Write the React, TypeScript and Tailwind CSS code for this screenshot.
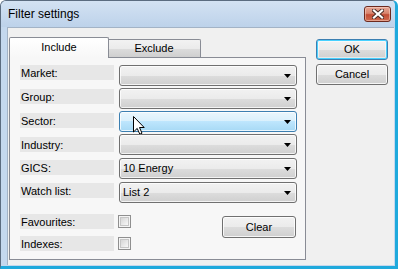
import React from 'react';

const FONT = "font-['Liberation_Sans',Arial,sans-serif]";

const rows = [
    { label: 'Market:', value: '', top: 'mt-0', lab: 'mt-0', hover: false },
    { label: 'Group:', value: '', top: 'mt-[2px]', lab: 'mt-[1px]', hover: false },
    { label: 'Sector:', value: '', top: 'mt-[2px]', lab: 'mt-[2px]', hover: true },
    { label: 'Industry:', value: '', top: 'mt-[2px]', lab: 'mt-[3px]', hover: false },
    { label: 'GICS:', value: '10 Energy', top: 'mt-[3px]', lab: 'mt-[2px]', hover: false },
    { label: 'Watch list:', value: 'List 2', top: 'mt-[3px]', lab: 'mt-[1px]', hover: false },
];

const Arrow = () => (
    <svg width="7" height="4" viewBox="0 0 7 4" className="ml-auto mr-[5px] shrink-0">
        <polygon points="0,0 7,0 3.5,4" fill="#000" />
    </svg>
);

const Combo = ({ value, hover }: { value: string; hover: boolean }) => (
    <div
        className={`relative w-[178px] h-[21px] rounded-[3px] border flex items-center pl-[3px] text-[11px] text-black shadow-[inset_0_0_0_1px_rgba(255,255,255,0.75)] ${
            hover
                ? 'border-[#3c7fb1] bg-[linear-gradient(#eaf6fd_0%,#d9f0fc_50%,#bee6fd_50%,#a7d9f5_100%)]'
                : 'border-[#707070] bg-[linear-gradient(#f2f2f2_0%,#ebebeb_50%,#dddddd_50%,#cfcfcf_100%)]'
        }`}
    >
        <span>{value}</span>
        <Arrow />
        {hover && (
            <svg width="12" height="19" viewBox="0 0 12 19" className="absolute left-[13px] top-[4px]">
                <path d="M0.5 0.5 L0.5 16 L4.2 12.4 L6.8 18.2 L9 17.2 L6.5 11.5 L11.2 11.5 Z" fill="#fff" stroke="#000" strokeWidth="1" />
            </svg>
        )}
    </div>
);

const Button = ({ text, isDefault }: { text: string; isDefault?: boolean }) => (
    <div
        className={`h-[21px] w-[72px] rounded-[3px] border flex items-center justify-center text-[11px] text-black bg-[linear-gradient(#f2f2f2_0%,#ebebeb_50%,#dddddd_50%,#cfcfcf_100%)] ${
            isDefault
                ? 'border-[#3c7fb1] shadow-[inset_0_0_0_1px_#48d1ff,inset_0_0_0_2px_rgba(255,255,255,0.5)]'
                : 'border-[#707070] shadow-[inset_0_0_0_1px_rgba(255,255,255,0.8)]'
        }`}
    >
        {text}
    </div>
);

const Checkbox = () => (
    <div className="w-[13px] h-[13px] border border-[#8f8f8f] bg-[#f4f4f4] flex items-center justify-center">
        <div className="w-[9px] h-[9px] border border-[#c6c6c6] bg-[linear-gradient(135deg,#d6d6d6,#f8f8f8)]" />
    </div>
);

const Label = ({ text, extra }: { text: string; extra?: string }) => (
    <div className={`w-[94px] h-[15px] bg-[#e7e7e7] pl-[1px] pt-[2px] text-[11px] leading-[13px] text-black ${extra ?? ''}`}>
        {text}
    </div>
);

export default function App() {
    return (
        <div className={`${FONT} w-[398px] h-[269px] flex flex-col bg-[#c4d8ee] border-t border-l border-[#5b6c80] border-r-[3px] border-r-[#1fa9dc] border-b-[3px] border-b-[#1fa9dc] rounded-tl-[6px] rounded-tr-[6px] overflow-hidden`}>
            {/* Title bar */}
            <div className="h-[26px] flex items-start justify-between pl-[7px] pr-[4px] bg-[linear-gradient(#d3e2f3,#bdd2ea)]">
                <span className="mt-[5px] text-[12px] leading-[16px] text-black">Filter settings</span>
                <div className="mt-[5px] w-[27px] h-[16px] rounded-[3px] border border-[#6d2a1f] bg-[linear-gradient(#e6a594_0%,#d98670_45%,#c24d36_55%,#cf6b50_100%)] shadow-[inset_0_0_0_1px_rgba(255,230,220,0.45)] flex items-center justify-center">
                    <svg width="12" height="10" viewBox="0 0 12 10">
                        <path d="M2 1.5 L10 8.5 M10 1.5 L2 8.5" stroke="#4a2a25" strokeWidth="4" strokeLinecap="square" />
                        <path d="M2 1.5 L10 8.5 M10 1.5 L2 8.5" stroke="#fff" strokeWidth="2.2" strokeLinecap="square" />
                    </svg>
                </div>
            </div>

            {/* Frame body */}
            <div className="flex-1 flex pl-[6px] pr-[1px] pb-[1px]">
                <div className="flex-1 flex items-start bg-[#f0f0f0] border-l border-t border-[#a3b3c6] pl-[1px] pt-[9px]">
                    {/* Tabs + panel */}
                    <div className="w-[297px] flex flex-col">
                        <div className="h-[20px] flex items-end">
                            <div className="relative z-10 -mb-[1px] w-[100px] h-[21px] border-x border-t border-[#898c95] rounded-t-[2px] bg-[linear-gradient(#ffffff,#f7f7f7)] flex items-center justify-center text-[11px] text-black pb-[2px]">
                                Include
                            </div>
                            <div className="w-[93px] h-[18px] -ml-[1px] border-r border-t border-[#898c95] rounded-tr-[2px] bg-[linear-gradient(#f2f2f2_0%,#ebebeb_50%,#dddddd_50%,#cfcfcf_100%)] flex items-center justify-center text-[11px] text-black">
                                Exclude
                            </div>
                        </div>
                        <div className="h-[203px] border border-[#898c95] bg-[#f7f7f7] pl-[10px] pr-[8px] pt-[7px] flex flex-col">
                            {rows.map(r => (
                                <div key={r.label} className={`flex items-start gap-[5px] ${r.top}`}>
                                    <Label text={r.label} extra={r.lab} />
                                    <Combo value={r.value} hover={r.hover} />
                                </div>
                            ))}

                            <div className="flex items-start mt-[11px]">
                                <div className="flex flex-col gap-[7px]">
                                    <div className="flex items-center gap-[4px]">
                                        <Label text="Favourites:" />
                                        <Checkbox />
                                    </div>
                                    <div className="flex items-center gap-[4px]">
                                        <Label text="Indexes:" />
                                        <Checkbox />
                                    </div>
                                </div>
                                <div className="ml-auto mr-[1px] mt-[2px] w-[74px] h-[22px] rounded-[3px] border border-[#707070] shadow-[inset_0_0_0_1px_rgba(255,255,255,0.8)] bg-[linear-gradient(#f2f2f2_0%,#ebebeb_50%,#dddddd_50%,#cfcfcf_100%)] flex items-center justify-center text-[11px] text-black">
                                    Clear
                                </div>
                            </div>
                        </div>
                    </div>

                    {/* Buttons */}
                    <div className="ml-[10px] mt-[2px] flex flex-col gap-[4px]">
                        <Button text="OK" isDefault />
                        <Button text="Cancel" />
                    </div>
                </div>
            </div>
        </div>
    );
}
